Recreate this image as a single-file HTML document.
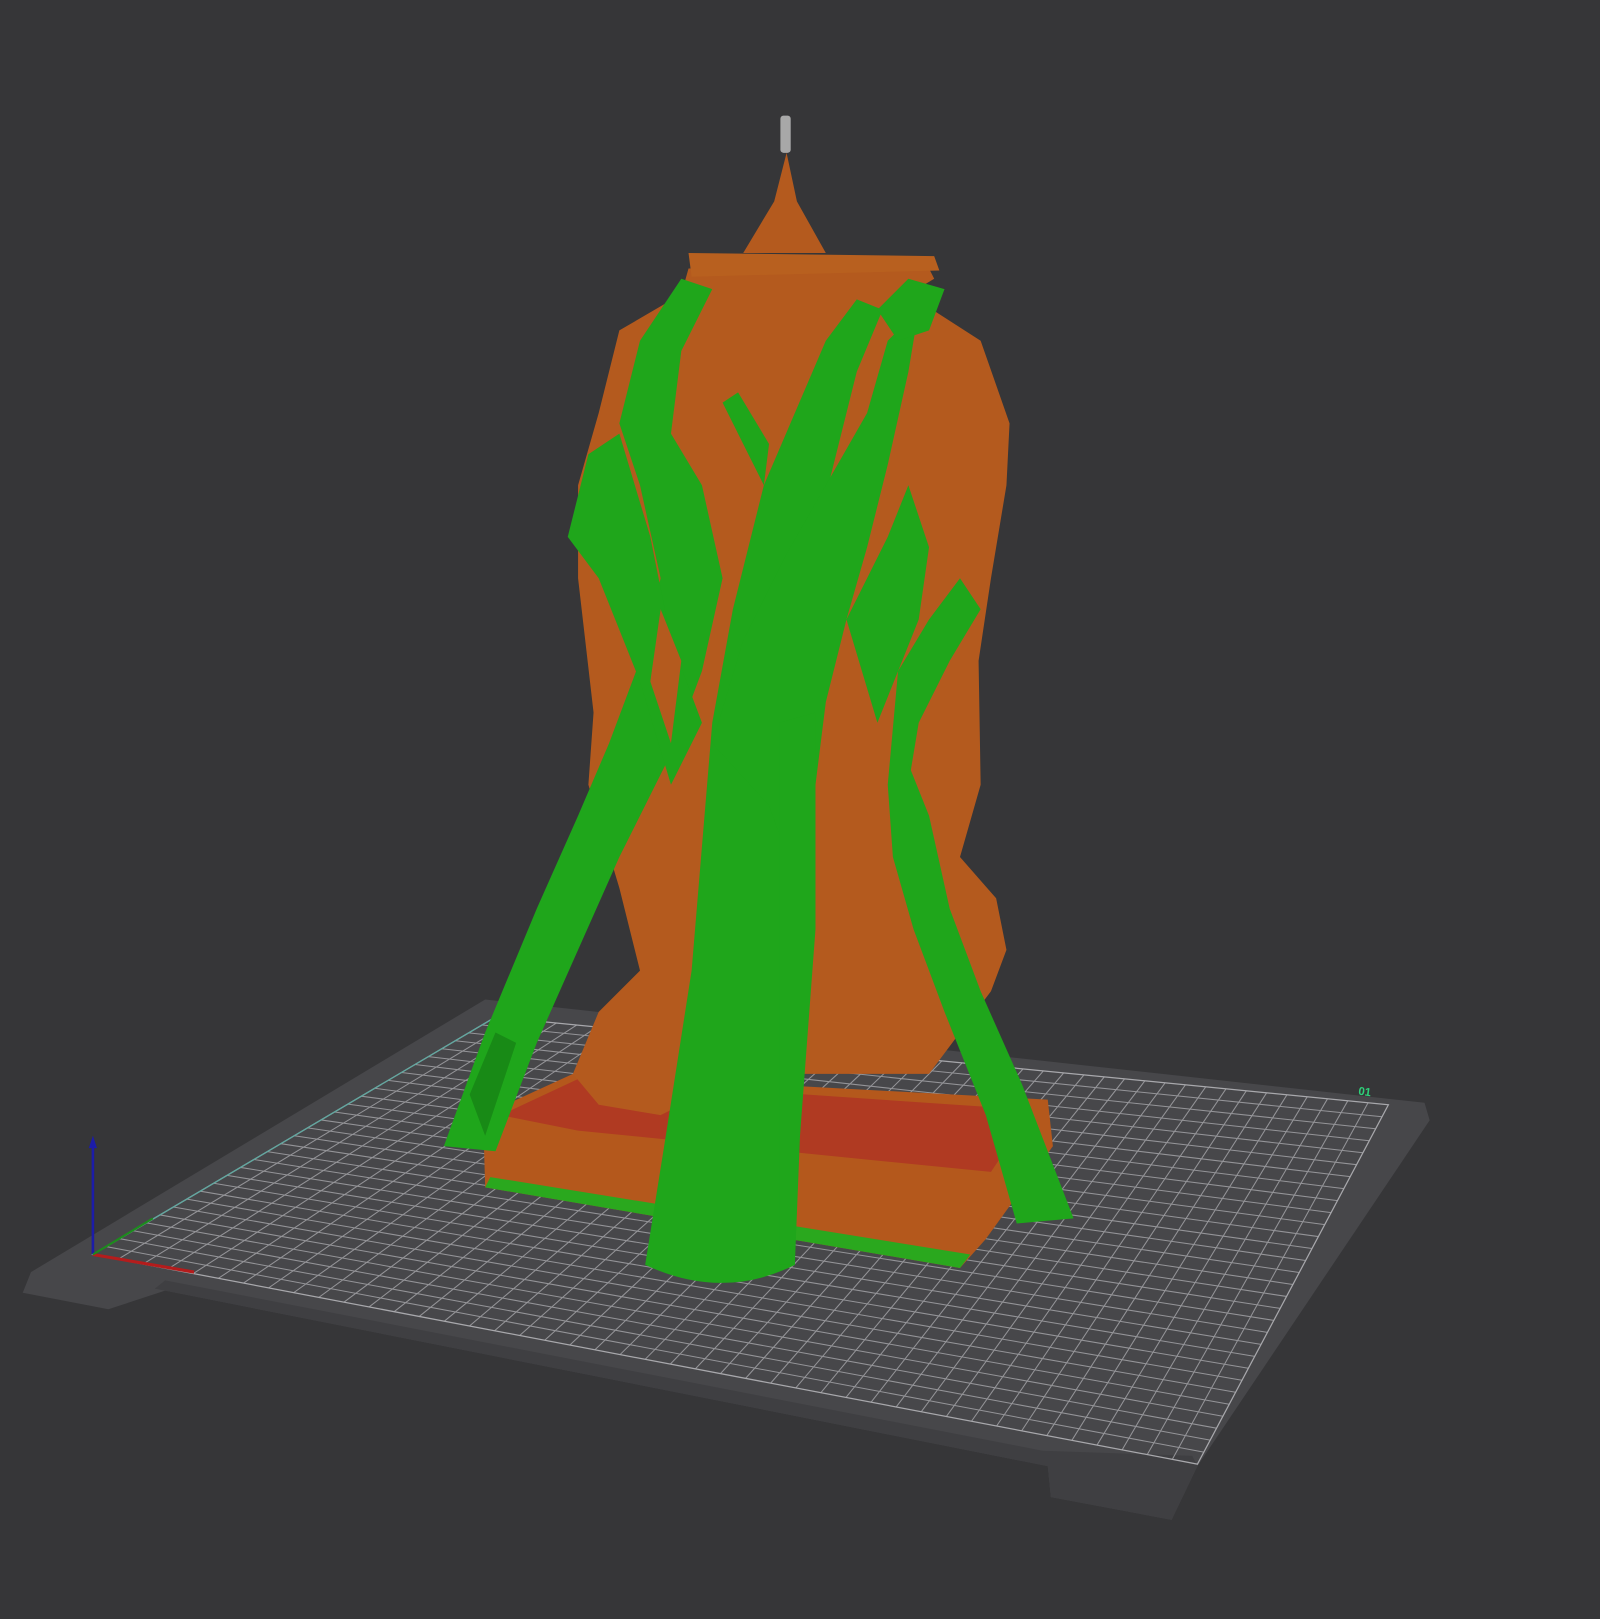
<!DOCTYPE html>
<html><head><meta charset="utf-8"><style>html,body{margin:0;padding:0;background:#363638;overflow:hidden}svg{display:block}</style></head>
<body>
<svg id="s" width="1600" height="1619" viewBox="0 0 1550 1568" preserveAspectRatio="none" xmlns="http://www.w3.org/2000/svg">
<rect width="1550" height="1568" fill="#363638"/>
<polygon points="470,968 1380,1068 1385,1085 1160,1420 1135,1472 1018,1450 1015,1420 160,1250 105,1268 22,1252 30,1232" fill="#47474a"/>
<polygon points="150,1248 1015,1420 1018,1450 1135,1472 1160,1420 1155,1410 1010,1405 160,1240" fill="#3f3f42"/>
<g id="grid" stroke="#a8a8ac" stroke-width="1" opacity="0.8"></g>
<polygon points="480,985 1345,1070 1160,1418 90,1215" fill="none" stroke="#a8a8ac" stroke-width="1.2"/>
<line x1="90" y1="1215" x2="480" y2="985" stroke="#5fa8a0" stroke-width="1.2"/>
<text x="1316" y="1062" fill="#2ed27a" font-family="Liberation Sans, sans-serif" font-size="11" font-weight="bold" transform="rotate(8 1330 1058)">01</text>
<line x1="90" y1="1215" x2="90" y2="1108" stroke="#1c1ca8" stroke-width="2.5"/>
<polygon points="86,1112 94,1112 90,1100" fill="#1c1ca8"/>
<line x1="90" y1="1215" x2="188" y2="1232" stroke="#b41c1c" stroke-width="3"/>
<line x1="90" y1="1215" x2="148" y2="1180" stroke="#1c8c1c" stroke-width="2"/>
<polygon points="468,1080 555,1040 1015,1065 1020,1110 955,1200 930,1228 470,1150" fill="#b4581c"/>
<polygon points="485,1080 560,1045 1000,1075 960,1135 560,1095" fill="#b03a22"/>
<polygon points="470,1150 930,1228 940,1215 475,1140" fill="#2aa81e"/>
<path d="M667,260 L900,260 L905,270 L880,285 L950,330 L978,410 L975,470 L960,560 L948,640 L950,760 L930,830 L965,870 L975,920 L960,960 L930,1000 L900,1040 L720,1040 L640,1080 L580,1070 L555,1040 L580,980 L620,940 L600,860 L570,760 L575,690 L560,560 L560,470 L580,400 L600,320 L660,285 Z" fill="#b45a1e"/>
<path d="M667,245 L905,248 L910,262 L670,268 Z" fill="#b8601f"/>
<path d="M720,245 L750,195 L762,148 L772,195 L800,245 Z" fill="#b45a1e"/>
<rect x="756" y="112" width="10" height="36" rx="3" fill="#a8a8a8"/>
<g fill="#1fa61b">
<path d="M430,1110 L470,1000 L520,880 L560,790 L590,720 L620,640 L640,560 L620,470 L600,410 L620,330 L660,270 L690,280 L660,340 L650,420 L680,470 L700,560 L680,650 L650,730 L600,830 L560,920 L520,1010 L480,1115 Z"/>
<path d="M550,520 L570,440 L600,420 L630,520 L650,620 L680,700 L650,760 L620,660 L580,560 Z"/>
<path d="M625,1225 L645,1100 L670,940 L680,820 L690,700 L710,590 L740,470 L770,400 L800,330 L830,290 L855,300 L830,360 L810,440 L790,520 L770,620 L760,720 L760,850 L760,980 L760,1100 L770,1225 Q700,1260 625,1225 Z"/>
<path d="M740,470 L720,430 L700,390 L715,380 L745,430 Z"/>
<path d="M690,720 L720,620 L760,540 L800,470 L840,400 L860,330 L890,300 L880,360 L860,450 L840,530 L820,600 L800,680 L790,760 L770,850 L745,780 Z"/>
<path d="M820,600 L860,520 L880,470 L900,530 L890,600 L870,650 L850,700 Z"/>
<path d="M870,650 L900,600 L930,560 L950,590 L920,640 L890,700 L880,760 L860,760 Z"/>
<path d="M860,760 L880,740 L900,790 L920,880 L950,960 L990,1050 L1040,1180 L985,1185 L955,1080 L915,980 L885,900 L865,830 Z"/>
<path d="M850,300 L880,270 L915,280 L900,320 L870,330 Z"/>
<path d="M755,700 L790,690 L790,900 L775,1100 L770,1225 L755,1225 Z"/>
</g>
<path d="M455,1060 L480,1000 L500,1010 L470,1100 Z" fill="#188a16"/>
<path d="M640,590 L660,640 L650,720 L630,660 Z" fill="#b45a1e"/>
</svg>
<script>
var g=document.getElementById('grid');
function L(a,b,c,d){var l=document.createElementNS('http://www.w3.org/2000/svg','line');l.setAttribute('x1',a);l.setAttribute('y1',b);l.setAttribute('x2',c);l.setAttribute('y2',d);g.appendChild(l);}
var A=[480,985],B=[1345,1070],C=[1160,1418],D=[90,1215];
function lerp(p,q,t){return [p[0]+(q[0]-p[0])*t,p[1]+(q[1]-p[1])*t];}
var n=44,m=30;
for(var i=1;i<n;i++){var t=i/n,p=lerp(A,B,t),q=lerp(D,C,t);L(p[0],p[1],q[0],q[1]);}
for(var j=1;j<m;j++){var t=j/m,p=lerp(A,D,t),q=lerp(B,C,t);L(p[0],p[1],q[0],q[1]);}
</script>
</body></html>
